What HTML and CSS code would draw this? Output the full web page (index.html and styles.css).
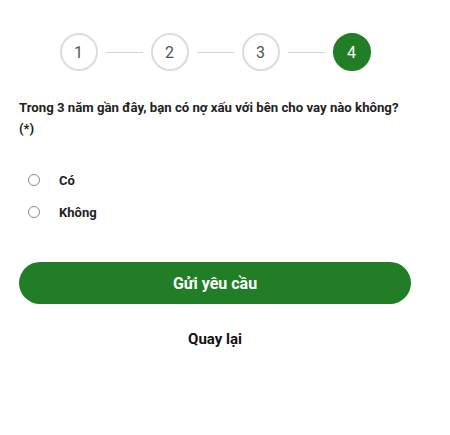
FILE: index.html
```html
<!DOCTYPE html>
<html lang="vi">
<head>
<meta charset="utf-8">
<link rel="stylesheet" href="styles.css">
</head>
<body>
<div class="page">
  <div class="steps">
    <div class="step">1</div>
    <div class="line"></div>
    <div class="step">2</div>
    <div class="line"></div>
    <div class="step">3</div>
    <div class="line"></div>
    <div class="step active">4</div>
  </div>
  <p class="question">Trong 3 năm gần đây, bạn có nợ xấu với bên cho vay nào không?<br>(*)</p>
  <div class="options">
    <label class="option"><span class="radio"></span><span class="label">Có</span></label>
    <label class="option"><span class="radio"></span><span class="label">Không</span></label>
  </div>
  <button class="submit">Gửi yêu cầu</button>
  <div class="back">Quay lại</div>
</div>
</body>
</html>
```

FILE: styles.css
```css
* { box-sizing: border-box; }
html, body { margin: 0; padding: 0; background: #fff; }
body { font-family: Roboto, "Noto Sans", Arial, sans-serif; color: #222; }
.page { width: 392px; margin-left: 19px; padding-top: 33px; }
.steps { display: flex; align-items: center; justify-content: center; gap: 8px; }
.step {
  width: 38px; height: 38px; border-radius: 50%;
  border: 2px solid #dcdcdc; color: #555;
  display: flex; align-items: center; justify-content: center;
  font-size: 16px; background: #fff;
}
.step.active { background: #217d26; border-color: #217d26; color: #fff; }
.line { width: 37px; height: 1px; background: #d4d4d4; }
.question {
  margin: 26px 0 0; font-size: 13.2px; font-weight: 700; line-height: 21px; color: #222;
}
.options { margin-top: 31px; display: flex; flex-direction: column; gap: 12px; }
.option { display: flex; align-items: center; height: 20px; padding-left: 9px; }
.radio {
  width: 12px; height: 12px; border-radius: 50%;
  border: 1px solid #8a8a8a; margin-right: 19px; flex: none;
}
.label { font-size: 13px; font-weight: 700; color: #222; }
.submit {
  display: block; width: 392px; height: 42px; margin-top: 40px;
  border: none; border-radius: 21px; background: #217d26; color: #fff;
  font-family: Roboto, "Noto Sans", Arial, sans-serif; font-size: 16px; font-weight: 700;
}
.back { margin-top: 26px; text-align: center; font-size: 15px; font-weight: 700; color: #111; }
```
